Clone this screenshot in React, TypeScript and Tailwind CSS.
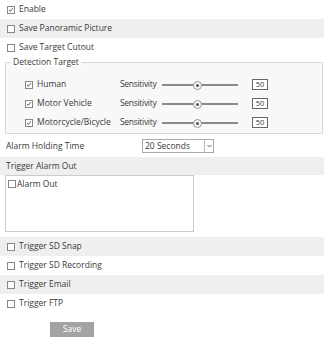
import React from "react";

const Box = ({ checked }: { checked?: boolean }) => (
  <span className="inline-flex w-[8px] h-[8px] border border-[#888] bg-white items-center justify-center shrink-0">
    {checked && (
      <svg width="8" height="8" viewBox="0 0 8 8" className="block">
        <path d="M1.3 4 L3.1 5.8 L6.6 1.6" stroke="#333" strokeWidth="1.1" fill="none" />
      </svg>
    )}
  </span>
);

const Row = ({ label, checked, band }: { label: string; checked?: boolean; band?: boolean }) => (
  <div className={`h-[19px] flex items-center pl-[7px] gap-[4px] ${band ? "bg-[#efefef]" : ""}`}>
    <Box checked={checked} />
    <span>{label}</span>
  </div>
);

const Slider = () => (
  <div className="relative w-[76px] h-[10px] flex items-center">
    <div className="w-full h-[2px] bg-[#8a8a8a]" />
    <div className="absolute left-[31px] top-[1px] w-[9px] h-[9px] rounded-full border border-[#999] bg-[#f4f4f4] flex items-center justify-center">
      <div className="w-[3px] h-[3px] rounded-full bg-[#555]" />
    </div>
  </div>
);

const DetRow = ({ label }: { label: string }) => (
  <div className="h-[19px] flex items-center">
    <div className="w-[114px] flex items-center pl-[19px] gap-[4px]">
      <Box checked />
      <span>{label}</span>
    </div>
    <span className="w-[42px] tracking-[-0.3px]">Sensitivity</span>
    <Slider />
    <div className="ml-[14px] w-[16px] h-[11px] border border-[#666] bg-white flex items-center justify-center text-[7.5px]">50</div>
  </div>
);

export default function App() {
  return (
    <div
      className="w-[324px] h-[337px] bg-white text-[#3a3a3a] text-[8.5px] leading-none overflow-hidden"
      style={{ fontFamily: '"Open Sans", "Noto Sans", sans-serif' }}
    >
      <Row label="Enable" checked />
      <Row label="Save Panoramic Picture" band />
      <Row label="Save Target Cutout" />
      <div className="relative mt-[5px] ml-[5px] mr-[1px] h-[72px] border border-[#d9d9d9] bg-[#f8f8f8] pt-[12px]">
        <div className="absolute -top-[5px] left-[5px] px-[2px] bg-white leading-none">Detection Target</div>
        <DetRow label="Human" />
        <DetRow label="Motor Vehicle" />
        <DetRow label="Motorcycle/Bicycle" />
      </div>
      <div className="h-[22px] flex items-center pl-[6px] mt-[1px]">
        <span className="w-[136px]">Alarm Holding Time</span>
        <div className="w-[72px] h-[14px] border border-[#aaa] bg-white flex items-center">
          <span className="flex-1 pl-[2px]">20 Seconds</span>
          <div className="w-[9px] h-full border-l border-[#bbb] flex items-center justify-center">
            <svg width="5" height="4" viewBox="0 0 5 4"><path d="M0.5 1 L2.5 3 L4.5 1" stroke="#555" strokeWidth="0.9" fill="none" /></svg>
          </div>
        </div>
      </div>
      <div className="h-[18px] bg-[#efefef] flex items-center pl-[6px]">Trigger Alarm Out</div>
      <div className="ml-[5px] w-[189px] h-[57px] border border-[#ccc] bg-white pt-[4px] pl-[2px]">
        <div className="flex items-center gap-[1px]">
          <Box />
          <span>Alarm Out</span>
        </div>
      </div>
      <div className="h-[5px]" />
      <Row label="Trigger SD Snap" band />
      <Row label="Trigger SD Recording" />
      <Row label="Trigger Email" band />
      <Row label="Trigger FTP" />
      <div className="pl-[50px] pt-[9px]">
        <div className="w-[44px] h-[15px] bg-[#a3a3a3] text-white flex items-center justify-center">Save</div>
      </div>
    </div>
  );
}
